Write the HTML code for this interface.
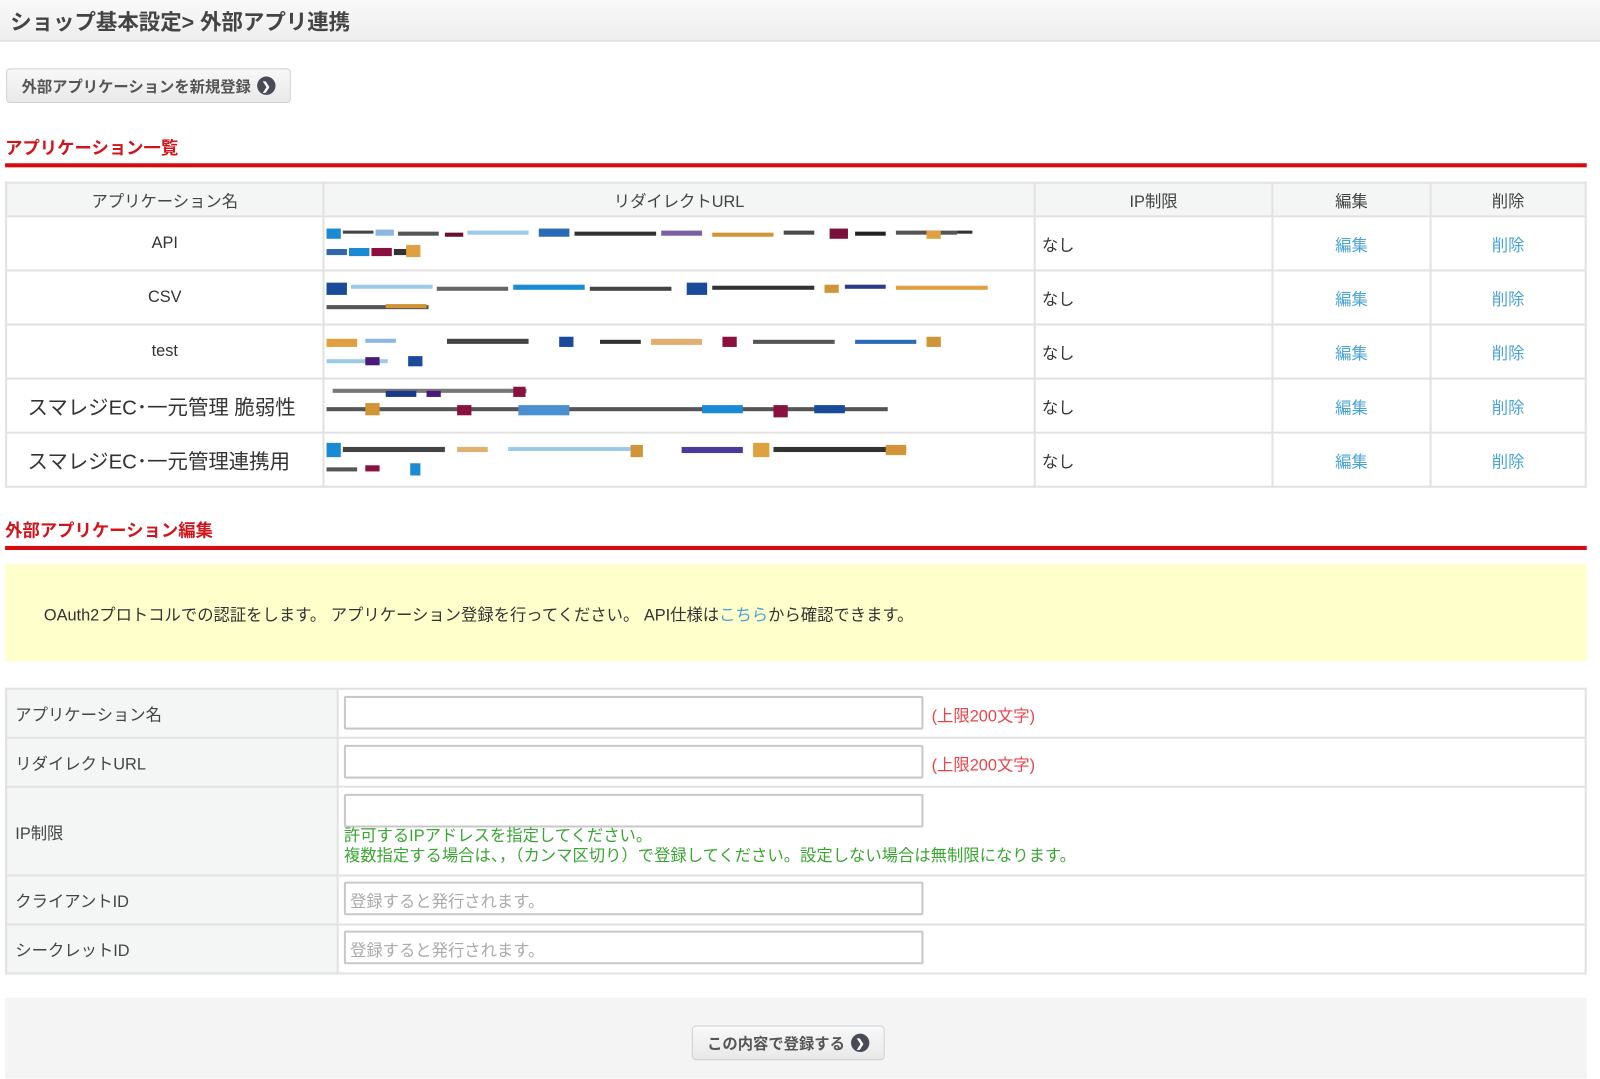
<!DOCTYPE html>
<html lang="ja"><head><meta charset="utf-8">
<style>
*{box-sizing:border-box;margin:0;padding:0}
body{width:1600px;height:1079px;background:#fff;font-family:"Liberation Sans","Noto Sans CJK JP",sans-serif;color:#333;position:relative;overflow:hidden;font-size:16px}
#w{position:absolute;left:0;top:0;width:1568px;height:1057px;transform:scale(1.0204);transform-origin:0 0}
.a{position:absolute}
.hdr{left:0;top:0;width:1568px;height:41px;background:linear-gradient(#f9f9f9,#eeeeee);border-bottom:2px solid #e4e4e4}
.hdr span{position:absolute;left:10px;top:6px;font-size:21px;font-weight:bold;color:#444}
.btn{border:1px solid #cdd0d6;border-radius:4px;background:linear-gradient(#f8f8f8,#e9e9ea);font-size:15px;font-weight:bold;color:#555;display:flex;align-items:center;justify-content:center;gap:6px}
.ico{width:18px;height:18px;border-radius:50%;background:#484b55;color:#fff;font-size:11px;display:inline-flex;align-items:center;justify-content:center}
.h2{font-size:17px;font-weight:bold;color:#d0141c}
.rl{height:4px;background:#d40c10;left:5px;width:1550px}
table{border-collapse:collapse;position:absolute}
td,th{border:2px solid #e2e2e2}
.lt th{background:#f4f5f5;font-weight:normal;height:33px;font-size:16px;color:#444}
.lt td{height:53px;font-size:16px}
.n{padding-left:6px}
.c{text-align:center}
.lk{color:#4aa3d6;text-align:center}
.ft td{font-size:16px}
.ft td.l{background:#f4f5f5;padding-left:8px;width:325px;color:#444}
.inp{position:absolute;left:337px;width:568px;height:33px;border:2px solid #c8c8c8;border-radius:2px;background:#fff;font-size:16px;color:#aaa;padding:4px 4px}
.red{color:#e8454a;font-size:16px}
.grn{color:#3aa532;font-size:16px;line-height:20px}
</style></head><body><div id="w">
<div class="a hdr"><span>ショップ基本設定&gt; 外部アプリ連携</span></div>
<div class="a btn" style="left:6px;top:67px;width:279px;height:34px">外部アプリケーションを新規登録 <span class="ico">❯</span></div>
<div class="a h2" style="left:5px;top:131px">アプリケーション一覧</div>
<div class="a rl" style="top:160px"></div>
<table class="lt" style="left:5px;top:178px;width:1550px">
<tr><th style="width:311px">アプリケーション名</th><th style="width:697px">リダイレクトURL</th><th style="width:233px">IP制限</th><th style="width:155px">編集</th><th>削除</th></tr>
<tr><td class="c">API</td><td><svg width="680" height="40"><g><rect x="2" y="8" width="14" height="10" fill="#1a8ad4"/><rect x="18" y="10" width="30" height="3" fill="#444"/><rect x="50" y="9" width="18" height="6" fill="#8db7e0"/><rect x="72" y="11" width="40" height="4" fill="#555"/><rect x="118" y="12" width="18" height="4" fill="#6a0e30"/><rect x="140" y="10" width="60" height="4" fill="#9ccbe8"/><rect x="210" y="8" width="30" height="8" fill="#2b6ab4"/><rect x="245" y="11" width="80" height="4" fill="#333"/><rect x="330" y="10" width="40" height="5" fill="#7b5fa4"/><rect x="380" y="12" width="60" height="4" fill="#d19436"/><rect x="450" y="10" width="30" height="4" fill="#4a4a4a"/><rect x="495" y="8" width="18" height="10" fill="#7a0f3a"/><rect x="520" y="11" width="30" height="4" fill="#222"/><rect x="560" y="10" width="60" height="4" fill="#555"/><rect x="590" y="10" width="14" height="8" fill="#e0a040"/><rect x="620" y="10" width="15" height="3" fill="#333"/><rect x="2" y="28" width="20" height="6" fill="#3366aa"/><rect x="24" y="27" width="20" height="8" fill="#1a8ad4"/><rect x="46" y="27" width="20" height="8" fill="#8a1040"/><rect x="68" y="28" width="20" height="6" fill="#333"/><rect x="80" y="24" width="14" height="12" fill="#e0a040"/></g></svg></td><td class="n">なし</td><td class="lk">編集</td><td class="lk">削除</td></tr>
<tr><td class="c">CSV</td><td><svg width="680" height="40"><rect x="2" y="8" width="20" height="12" fill="#1a4a9a"/><rect x="26" y="10" width="80" height="4" fill="#9ccbe8"/><rect x="110" y="12" width="70" height="4" fill="#666"/><rect x="185" y="10" width="70" height="5" fill="#1a8ad4"/><rect x="260" y="12" width="80" height="4" fill="#444"/><rect x="355" y="8" width="20" height="12" fill="#1a4a9a"/><rect x="380" y="11" width="100" height="4" fill="#333"/><rect x="490" y="10" width="14" height="8" fill="#d19436"/><rect x="510" y="10" width="40" height="4" fill="#2b3a8a"/><rect x="560" y="11" width="90" height="4" fill="#e0a040"/><rect x="2" y="30" width="100" height="4" fill="#555"/><rect x="60" y="29" width="40" height="4" fill="#d19436"/></svg></td><td class="n">なし</td><td class="lk">編集</td><td class="lk">削除</td></tr>
<tr><td class="c">test</td><td><svg width="680" height="40"><rect x="2" y="10" width="30" height="8" fill="#e0a040"/><rect x="40" y="10" width="30" height="4" fill="#8db7e0"/><rect x="120" y="10" width="80" height="5" fill="#444"/><rect x="230" y="8" width="14" height="10" fill="#1a4a9a"/><rect x="270" y="11" width="40" height="4" fill="#333"/><rect x="320" y="10" width="50" height="6" fill="#e0b070"/><rect x="390" y="8" width="14" height="10" fill="#8a1040"/><rect x="420" y="11" width="80" height="4" fill="#555"/><rect x="520" y="11" width="60" height="4" fill="#2b6ab4"/><rect x="590" y="8" width="14" height="10" fill="#d19436"/><rect x="2" y="30" width="60" height="4" fill="#9ccbe8"/><rect x="40" y="28" width="14" height="8" fill="#4a1a7a"/><rect x="82" y="27" width="14" height="10" fill="#1a4a9a"/></svg></td><td class="n">なし</td><td class="lk">編集</td><td class="lk">削除</td></tr>
<tr><td style="padding-left:20px;font-size:20px">スマレジEC･一元管理 脆弱性</td><td><svg width="680" height="40"><rect x="8" y="6" width="190" height="4" fill="#777"/><rect x="60" y="8" width="30" height="6" fill="#1a3a8a"/><rect x="100" y="8" width="14" height="6" fill="#4a1a7a"/><rect x="185" y="4" width="12" height="10" fill="#8a1040"/><rect x="2" y="24" width="550" height="4" fill="#555"/><rect x="40" y="20" width="14" height="12" fill="#d19436"/><rect x="130" y="22" width="14" height="10" fill="#8a1040"/><rect x="190" y="22" width="50" height="10" fill="#4a90d0"/><rect x="370" y="22" width="40" height="8" fill="#1a8ad4"/><rect x="440" y="22" width="14" height="12" fill="#8a1040"/><rect x="480" y="22" width="30" height="8" fill="#1a4a9a"/></svg></td><td class="n">なし</td><td class="lk">編集</td><td class="lk">削除</td></tr>
<tr><td style="padding-left:20px;font-size:20px">スマレジEC･一元管理連携用</td><td><svg width="680" height="40"><rect x="2" y="6" width="14" height="14" fill="#1a8ad4"/><rect x="18" y="10" width="100" height="5" fill="#444"/><rect x="130" y="10" width="30" height="5" fill="#e0b070"/><rect x="180" y="10" width="120" height="4" fill="#9ccbe8"/><rect x="300" y="8" width="12" height="12" fill="#d19436"/><rect x="350" y="10" width="60" height="6" fill="#4a3a9a"/><rect x="420" y="6" width="16" height="14" fill="#e0a040"/><rect x="440" y="10" width="130" height="5" fill="#333"/><rect x="550" y="8" width="20" height="10" fill="#d19436"/><rect x="2" y="30" width="30" height="4" fill="#555"/><rect x="40" y="28" width="14" height="6" fill="#8a1040"/><rect x="84" y="26" width="10" height="12" fill="#1a8ad4"/></svg></td><td class="n">なし</td><td class="lk">編集</td><td class="lk">削除</td></tr>
</table>
<div class="a h2" style="left:5px;top:506px">外部アプリケーション編集</div>
<div class="a rl" style="top:535px"></div>
<div class="a" style="left:5px;top:553px;width:1550px;height:95px;background:#ffffcb"><span style="position:absolute;left:38px;top:36px;font-size:16px;color:#333">OAuth2プロトコルでの認証をします。 アプリケーション登録を行ってください。 API仕様は<span style="color:#4aa3d6">こちら</span>から確認できます。</span></div>
<table class="ft" style="left:5px;top:674px;width:1550px">
<tr style="height:48px"><td class="l">アプリケーション名</td><td></td></tr>
<tr style="height:48px"><td class="l">リダイレクトURL</td><td></td></tr>
<tr style="height:87px"><td class="l">IP制限</td><td></td></tr>
<tr style="height:48px"><td class="l">クライアントID</td><td></td></tr>
<tr style="height:48px"><td class="l">シークレットID</td><td></td></tr>
</table>
<div class="inp" style="top:682px"></div><span class="a red" style="left:913px;top:688px">(上限200文字)</span>
<div class="inp" style="top:730px"></div><span class="a red" style="left:913px;top:736px">(上限200文字)</span>
<div class="inp" style="top:778px"></div>
<div class="a grn" style="left:337px;top:810px">許可するIPアドレスを指定してください。<br>複数指定する場合は、，（カンマ区切り）で登録してください。設定しない場合は無制限になります。</div>
<div class="inp" style="top:864px">登録すると発行されます。</div>
<div class="inp" style="top:912px">登録すると発行されます。</div>
<div class="a" style="left:5px;top:978px;width:1550px;height:79px;background:#f4f4f4"></div>
<div class="a btn" style="left:678px;top:1005px;width:189px;height:34px">この内容で登録する <span class="ico">❯</span></div>
</div></body></html>
